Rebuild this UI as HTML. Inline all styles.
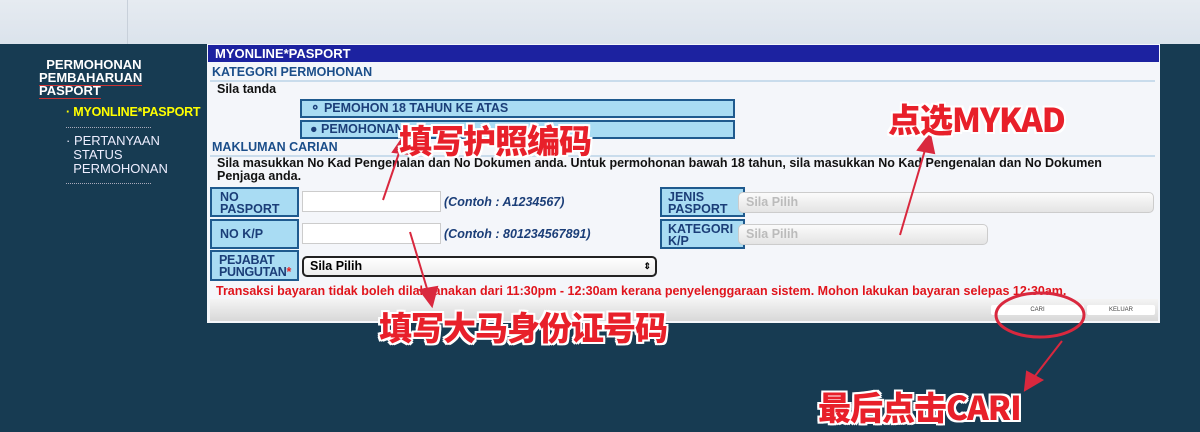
<!DOCTYPE html>
<html><head><meta charset="utf-8"><style>
*{margin:0;padding:0;box-sizing:border-box}
body{width:1200px;height:432px;position:relative;overflow:hidden;background:#173b52;font-family:"Liberation Sans",Arial,sans-serif}
.a{position:absolute}
.top{left:0;top:0;width:1200px;height:44px;background:linear-gradient(#e6ebf1,#dbe3ec)}
.panel{left:207px;top:44px;width:953px;height:279px;background:#f4f6fa}
.hd{left:208px;top:45px;width:951px;height:17px;background:#1c22a0;color:#fff;font-weight:bold;font-size:13px;padding-left:7px;line-height:18px}
.sec{color:#1b4e8a;font-weight:bold;font-size:12.5px}
.ln{height:2px;background:#c9dcec}
.t{font-size:12.5px;font-weight:bold;color:#111}
.rb{background:#a9dcf3;border:2px solid #1f5a8e;font-size:12.5px;font-weight:bold;color:#1b3e78;padding-left:8px;line-height:15px}
.lb{background:#a9dcf3;border:2px solid #1f5a8e;font-size:12.5px;font-weight:bold;color:#1b3e78;padding-left:8px;line-height:12px;white-space:nowrap}
.in{background:#fff;border:1px solid #ccc}
.ct{font-size:12.5px;font-weight:bold;font-style:italic;color:#1b3e78}
.sel{border:1px solid #ccc;border-radius:5px;background:linear-gradient(#fbfbfb,#e4e4e4);color:#bbb;font-size:12.5px;font-weight:bold;padding-left:7px;line-height:19px}
.an{font-family:"Noto Sans CJK SC","Liberation Sans",sans-serif;font-weight:900;color:#e8202a;text-shadow:-2px 0 #fff,2px 0 #fff,0 -2px #fff,0 2px #fff,-2px -2px #fff,2px 2px #fff,-2px 2px #fff,2px -2px #fff;white-space:nowrap;letter-spacing:-1px}
.nav{color:#fff;font-size:13px;font-weight:bold;line-height:13px}
</style></head><body>
<div class="a top"></div>
<div class="a" style="left:127px;top:0;width:1px;height:44px;background:#c8d0da"></div>
<div class="a nav" style="left:39px;top:58px">&nbsp;&nbsp;PERMOHONAN<br><span style="border-bottom:1px solid #c33">PEMBAHARUAN</span><br><span style="border-bottom:1px solid #c33">PASPORT</span></div>
<div class="a" style="left:66px;top:105px;color:#ff0;font-size:12.5px;font-weight:bold;letter-spacing:-0.2px">&#183; MYONLINE*PASPORT</div>
<div class="a" style="left:66px;top:127px;width:85px;border-top:1px dotted #aab"></div>
<div class="a" style="left:66px;top:134px;color:#eef;font-size:13px;line-height:14px">&#183; PERTANYAAN<br>&nbsp;&nbsp;STATUS<br>&nbsp;&nbsp;PERMOHONAN</div>
<div class="a" style="left:66px;top:183px;width:85px;border-top:1px dotted #aab"></div>

<div class="a panel"></div>
<div class="a hd">MYONLINE*PASPORT</div>
<div class="a sec" style="left:212px;top:65px">KATEGORI PERMOHONAN</div>
<div class="a ln" style="left:210px;top:80px;width:945px"></div>
<div class="a t" style="left:217px;top:82px">Sila tanda</div>
<div class="a rb" style="left:300px;top:99px;width:435px;height:19px">&#9900; PEMOHON 18 TAHUN KE ATAS</div>
<div class="a rb" style="left:300px;top:120px;width:435px;height:19px">&#9679; PEMOHONAN</div>
<div class="a sec" style="left:212px;top:140px">MAKLUMAN CARIAN</div>
<div class="a ln" style="left:210px;top:155px;width:945px"></div>
<div class="a t" style="left:217px;top:157px;width:900px;line-height:13px">Sila masukkan No Kad Pengenalan dan No Dokumen anda. Untuk permohonan bawah 18 tahun, sila masukkan No Kad Pengenalan dan No Dokumen Penjaga anda.</div>

<div class="a lb" style="left:210px;top:187px;width:89px;height:30px;padding-top:2px">NO<br>PASPORT</div>
<div class="a lb" style="left:210px;top:219px;width:89px;height:30px;line-height:26px">NO K/P</div>
<div class="a lb" style="left:210px;top:250px;width:89px;height:31px;padding-top:2px;padding-left:7px;letter-spacing:-0.3px">PEJABAT<br>PUNGUTAN<span style="color:#e22">*</span></div>
<div class="a in" style="left:302px;top:191px;width:139px;height:21px"></div>
<div class="a in" style="left:302px;top:223px;width:139px;height:21px"></div>
<div class="a ct" style="left:444px;top:195px">(Contoh : A1234567)</div>
<div class="a ct" style="left:444px;top:227px">(Contoh : 801234567891)</div>
<div class="a" style="left:302px;top:256px;width:355px;height:21px;border:2px solid #222;border-radius:5px;background:linear-gradient(#fff,#eee);font-size:12.5px;font-weight:bold;padding-left:6px;line-height:17px">Sila Pilih<span style="position:absolute;right:4px;font-size:9px">&#8661;</span></div>

<div class="a lb" style="left:660px;top:187px;width:85px;height:30px;padding-top:2px;padding-left:6px">JENIS<br>PASPORT</div>
<div class="a lb" style="left:660px;top:219px;width:85px;height:30px;padding-top:2px;padding-left:6px">KATEGORI<br>K/P</div>
<div class="a sel" style="left:738px;top:192px;width:416px;height:21px">Sila Pilih</div>
<div class="a sel" style="left:738px;top:224px;width:250px;height:21px">Sila Pilih</div>

<div class="a" style="left:216px;top:284px;color:#e0141c;font-size:12.5px;font-weight:bold;white-space:nowrap">Transaksi bayaran tidak boleh dilaksanakan dari 11:30pm - 12:30am kerana penyelenggaraan sistem. Mohon lakukan bayaran selepas 12:30am.</div>
<div class="a" style="left:210px;top:299px;width:948px;height:22px;background:linear-gradient(#f4f4f4,#d8d8d8)"></div>
<div class="a" style="left:991px;top:305px;width:93px;height:10px;background:#fff;border-radius:2px;font-size:6px;text-align:center;line-height:10px;color:#444">CARI</div>
<div class="a" style="left:1087px;top:305px;width:68px;height:10px;background:#fff;border-radius:2px;font-size:6px;text-align:center;line-height:10px;color:#444">KELUAR</div>

<svg class="a" style="left:0;top:0" width="1200" height="432">
<g stroke="#d9283e" stroke-width="2" fill="#d9283e">
<line x1="383" y1="200" x2="400" y2="150"/><polygon points="404,136 393,152 409,154"/>
<line x1="410" y1="232" x2="428" y2="292"/><polygon points="432,306 420,290 437,287"/>
<line x1="900" y1="235" x2="925" y2="150"/><polygon points="930,134 918,150 934,153"/>
<line x1="1062" y1="341" x2="1035" y2="376"/><polygon points="1025,390 1027,372 1042,380"/>
</g>
<ellipse cx="1040" cy="315" rx="44" ry="22" fill="none" stroke="#d9283e" stroke-width="3"/>
</svg>
<div class="a an" style="left:399px;top:115px;font-size:33px">填写护照编码</div>
<div class="a an" style="left:888px;top:94px;font-size:33px">点选MYKAD</div>
<div class="a an" style="left:379px;top:302px;font-size:33px">填写大马身份证号码</div>
<div class="a an" style="left:818px;top:382px;font-size:33px">最后点击CARI</div>
</body></html>
